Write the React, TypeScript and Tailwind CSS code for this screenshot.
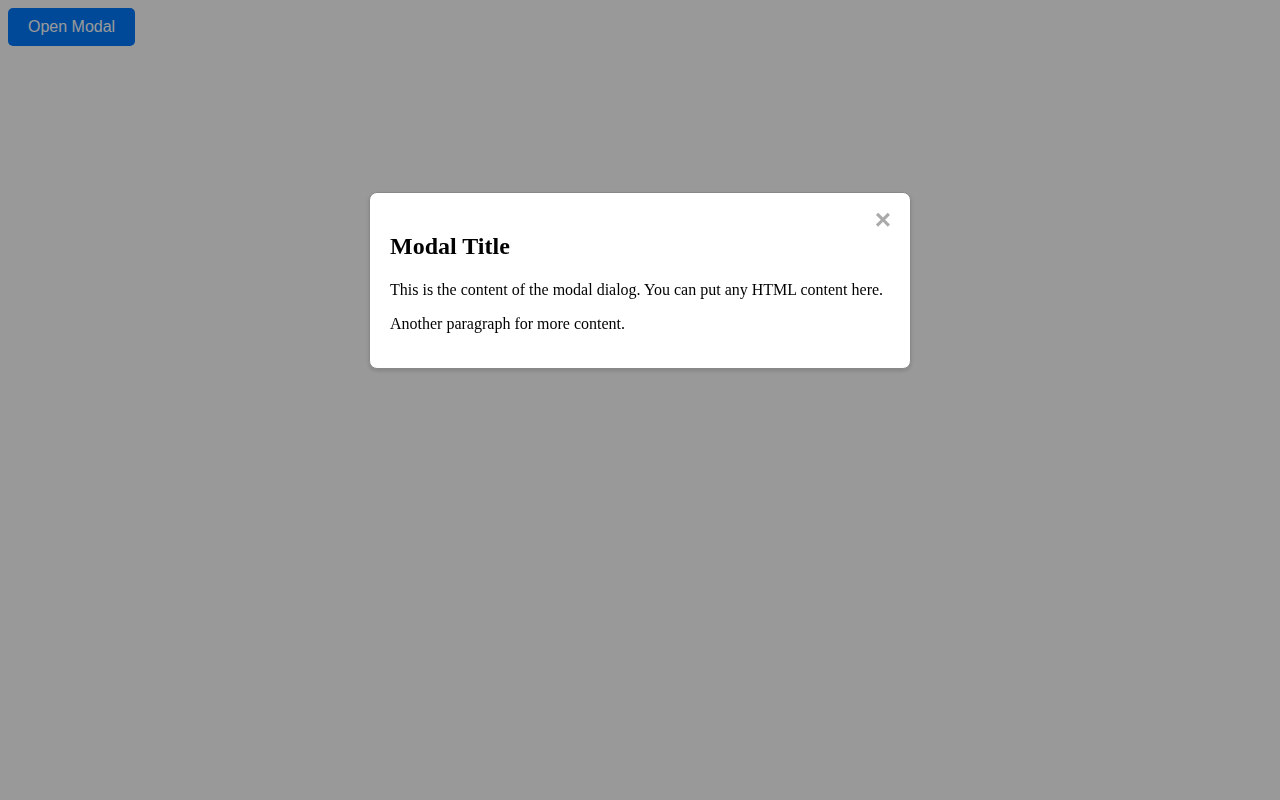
import { useState } from 'react';

// modal đơn giản với overlay mờ
export default function App() {
    const [isOpen, setIsOpen] = useState(true);

    return (
        <div className="min-h-screen bg-white font-['Liberation_Serif',serif]">
            <button
                onClick={() => setIsOpen(true)}
                className="m-2 px-5 py-[10px] text-base leading-[18px] text-white bg-[#007bff] rounded-[5px] font-['Liberation_Sans',Arial,sans-serif]"
            >
                Open Modal
            </button>

            {isOpen && (
                <div
                    className="fixed inset-0 z-10 flex flex-col items-center bg-black/40"
                    onClick={() => setIsOpen(false)}
                >
                    <div
                        className="relative mt-[192px] w-[542px] px-5 pt-5 pb-[19px] bg-white border border-[#888] rounded-lg shadow-[0_2px_4px_rgba(0,0,0,0.15)] text-black"
                        onClick={(e) => e.stopPropagation()}
                    >
                        <button
                            onClick={() => setIsOpen(false)}
                            className="absolute top-[11px] right-[19px] text-[28px] leading-8 font-bold text-[#aaa] font-['Liberation_Sans',Arial,sans-serif]"
                        >
                            ×
                        </button>
                        <h2 className="mt-5 mb-5 text-2xl leading-[27.6px] font-bold">Modal Title</h2>
                        <p className="mb-4 text-base leading-[18.4px]">
                            This is the content of the modal dialog. You can put any HTML content here.
                        </p>
                        <p className="mb-4 text-base leading-[18.4px]">Another paragraph for more content.</p>
                    </div>
                </div>
            )}
        </div>
    );
}
